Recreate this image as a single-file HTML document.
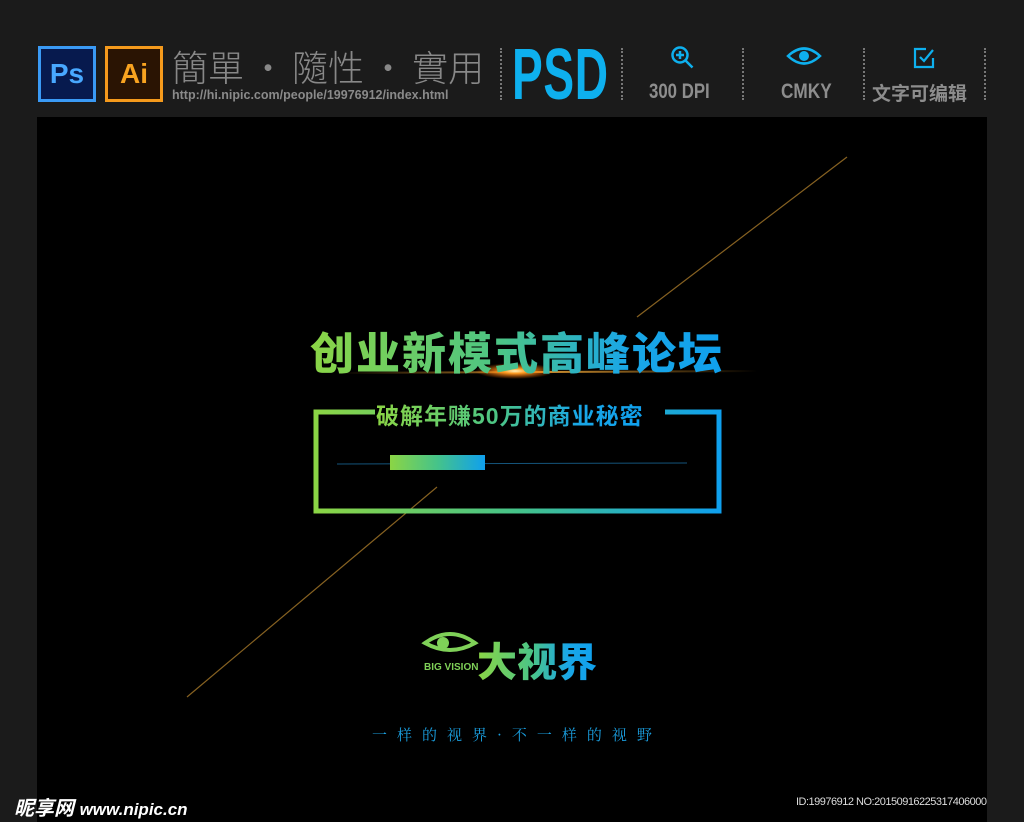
<!DOCTYPE html>
<html><head><meta charset="utf-8"><style>
body{margin:0;width:1024px;height:822px;background:#1b1b1b;position:relative;overflow:hidden;font-family:"Liberation Sans","Noto Sans CJK SC",sans-serif}
.a{position:absolute}
.dots{position:absolute;width:0;border-left:2px dotted #777;top:48px;height:52px}
.gt{background:linear-gradient(90deg,#8bd545 0%,#4cc585 45%,#1aa7e6 75%,#0fa0ee 100%);-webkit-background-clip:text;background-clip:text;color:transparent}
</style></head><body>
<div class="a" style="left:38px;top:46px;width:52px;height:50px;border:3px solid #3a9af5;background:#071a4e;color:#48a8ff;font-size:28px;font-weight:bold;line-height:50px;text-align:center">Ps</div>
<div class="a" style="left:105px;top:46px;width:52px;height:50px;border:3px solid #f59a1c;background:#2a1403;color:#f8a320;font-size:28px;font-weight:bold;line-height:50px;text-align:center">Ai</div>
<div class="a" style="left:172px;top:40px;color:#888;font-size:36px;font-family:'Noto Sans CJK TC',sans-serif;font-weight:300;white-space:nowrap;letter-spacing:0px">簡單<span style="margin:0 6px">·</span>隨性<span style="margin:0 6px">·</span>實用</div>
<div class="a" style="left:172px;top:88px;color:#8a8a8a;font-size:12.5px;font-weight:bold;white-space:nowrap">http://hi.nipic.com/people/19976912/index.html</div>
<div class="dots" style="left:500px"></div>
<div class="a" style="left:512px;top:36px;color:#0eb0ee;font-size:72px;font-weight:bold;line-height:78px;transform:scaleX(0.64);transform-origin:left;letter-spacing:1px">PSD</div>
<div class="dots" style="left:621px"></div>
<svg class="a" style="left:670px;top:45px" width="26" height="26" viewBox="0 0 26 26"><circle cx="10" cy="10" r="7.5" fill="none" stroke="#0eb0ee" stroke-width="2.5"/><path d="M10 6v8M6 10h8M15.5 15.5l7 7" stroke="#0eb0ee" stroke-width="2.5"/></svg>
<div class="a" style="left:649px;top:80px;color:#8d8d8d;font-size:21px;font-weight:bold;transform:scaleX(0.8);transform-origin:left;white-space:nowrap">300 DPI</div>
<div class="dots" style="left:742px"></div>
<svg class="a" style="left:786px;top:46px" width="36" height="20" viewBox="0 0 36 20"><path d="M2 10Q18-5 34 10Q18 25 2 10Z" fill="none" stroke="#0eb0ee" stroke-width="2.5"/><circle cx="18" cy="10" r="5" fill="#0eb0ee"/></svg>
<div class="a" style="left:781px;top:80px;color:#8d8d8d;font-size:21px;font-weight:bold;transform:scaleX(0.82);transform-origin:left">CMKY</div>
<div class="dots" style="left:863px"></div>
<svg class="a" style="left:912px;top:46px" width="26" height="24" viewBox="0 0 26 24"><path d="M14 3H3v18h18v-9" fill="none" stroke="#0eb0ee" stroke-width="2.2"/><path d="M8 11l4 4 9-11" fill="none" stroke="#0eb0ee" stroke-width="2.2"/></svg>
<div class="a" style="left:872px;top:79px;color:#8d8d8d;font-size:19px;font-weight:bold;white-space:nowrap">文字可编辑</div>
<div class="dots" style="left:984px"></div>
<div class="a" style="left:37px;top:117px;width:950px;height:705px;background:#000"></div>
<svg class="a" style="left:37px;top:117px" width="950" height="705">
<defs><linearGradient id="g" x1="0" x2="1"><stop offset="0" stop-color="#8bd545"/><stop offset=".5" stop-color="#45c38a"/><stop offset="1" stop-color="#0fa0ee"/></linearGradient>
<radialGradient id="fl"><stop offset="0" stop-color="#fff6c0"/><stop offset=".3" stop-color="#ff9a20"/><stop offset="1" stop-color="#ff6a00" stop-opacity="0"/></radialGradient>
<linearGradient id="ln" x1="0" x2="1"><stop offset="0" stop-color="#c08020" stop-opacity="0"/><stop offset=".5" stop-color="#d09030"/><stop offset="1" stop-color="#c08020" stop-opacity="0"/></linearGradient></defs>
<line x1="150" y1="580" x2="400" y2="370" stroke="#a87a2a" stroke-width="1.2" opacity=".8"/>
<line x1="600" y1="200" x2="810" y2="40" stroke="#a87a2a" stroke-width="1.2" opacity=".8"/>
<line x1="300" y1="256" x2="720" y2="254" stroke="url(#ln)" stroke-width="2"/>
<ellipse cx="478" cy="254" rx="40" ry="8" fill="url(#fl)"/>
<path d="M338 295H279V394H682V295H628" fill="none" stroke="url(#g)" stroke-width="5"/>
<line x1="300" y1="347" x2="650" y2="346" stroke="#1a6a9a" stroke-width="1" opacity=".8"/>
<rect x="353" y="338" width="95" height="15" fill="url(#g)"/>
<path d="M388 526q25-18 50 0q-25 14-50 0z" fill="none" stroke="#7fd158" stroke-width="4"/>
<circle cx="406" cy="526" r="6" fill="#7fd158"/>
</svg>
<div class="a gt" style="left:310px;top:318px;width:420px;font-size:44px;font-weight:900;white-space:nowrap;letter-spacing:2px">创业新模式高峰论坛</div>
<div class="a gt" style="left:376px;top:397px;font-size:23px;font-weight:bold;white-space:nowrap;letter-spacing:1px">破解年赚50万的商业秘密</div>
<div class="a" style="left:424px;top:662px;color:#7fd158;font-size:10px;font-weight:bold">BIG VISION</div>
<div class="a gt" style="left:477px;top:630px;font-size:40px;font-weight:900;white-space:nowrap">大视界</div>
<div class="a" style="left:372px;top:724px;color:#1a9fe0;font-size:15px;letter-spacing:10px;white-space:nowrap;font-family:'Noto Serif CJK SC',serif">一样的视界·不一样的视野</div>
<div class="a" style="left:14px;top:792px;color:#fff;font-size:20px;font-weight:bold;font-style:italic;white-space:nowrap">昵享网 <span style="font-size:17px">www.nipic.cn</span></div>
<div class="a" style="left:796px;top:796px;color:#ddd;font-size:11px;white-space:nowrap;letter-spacing:-.5px">ID:19976912 NO:20150916225317406000</div>
</body></html>
